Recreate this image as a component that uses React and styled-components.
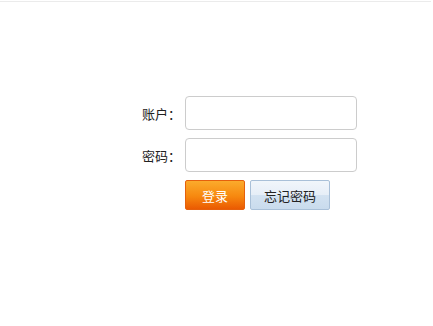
import React from "react";
import styled, { createGlobalStyle } from "styled-components";

const GlobalStyle = createGlobalStyle`
  html, body {
    margin: 0;
    padding: 0;
    background: #ffffff;
  }
  body {
    font-family: "Liberation Sans", "Noto Sans CJK SC", sans-serif;
    font-size: 13px;
    color: #333;
  }
`;

export default function App() {
  return (
    <>
      <GlobalStyle />
      <Page>
        <Form onSubmit={(e) => e.preventDefault()}>
          <Label htmlFor="account">账户：</Label>
          <Input id="account" type="text" />

          <Label htmlFor="password">密码：</Label>
          <Input id="password" type="password" />

          <Actions>
            <LoginButton type="submit">登录</LoginButton>
            <ForgetButton type="button">忘记密码</ForgetButton>
          </Actions>
        </Form>
      </Page>
    </>
  );
}

const Page = styled.div`
  margin-top: 1px;
  width: 431px;
  height: 325px;
  border-top: 1px solid #ebebeb;
  padding-top: 94px;
  box-sizing: border-box;
`;

const Form = styled.form`
  display: grid;
  grid-template-columns: 43px 172px;
  column-gap: 4px;
  row-gap: 8px;
  margin-left: 138px;
  align-items: center;
`;

const Label = styled.label`
  text-align: right;
  white-space: nowrap;
  font-family: "Noto Sans CJK SC", sans-serif;
  font-size: 13px;
  color: #222;
`;

const Input = styled.input`
  box-sizing: border-box;
  width: 172px;
  height: 34px;
  border: 1px solid #cccccc;
  border-radius: 4px;
  padding: 0 6px;
  font-size: 13px;
  background: #fff;
  outline: none;
`;

const Actions = styled.div`
  grid-column: 2;
  display: flex;
  gap: 5px;
`;

const BaseButton = styled.button`
  box-sizing: border-box;
  height: 30px;
  border-radius: 2px;
  font-family: "Noto Sans CJK SC", sans-serif;
  font-size: 13px;
  padding: 0;
  cursor: pointer;
`;

const LoginButton = styled(BaseButton)`
  width: 60px;
  color: #ffffff;
  border: 1px solid #e5600c;
  background: linear-gradient(#fbab2c, #f7880f 55%, #ea5a02);
`;

const ForgetButton = styled(BaseButton)`
  width: 80px;
  color: #222;
  border: 1px solid #a9c0d8;
  background: linear-gradient(#f1f6fb, #e6eef7 50%, #d3e2f1 50%, #c9dbed);
`;
